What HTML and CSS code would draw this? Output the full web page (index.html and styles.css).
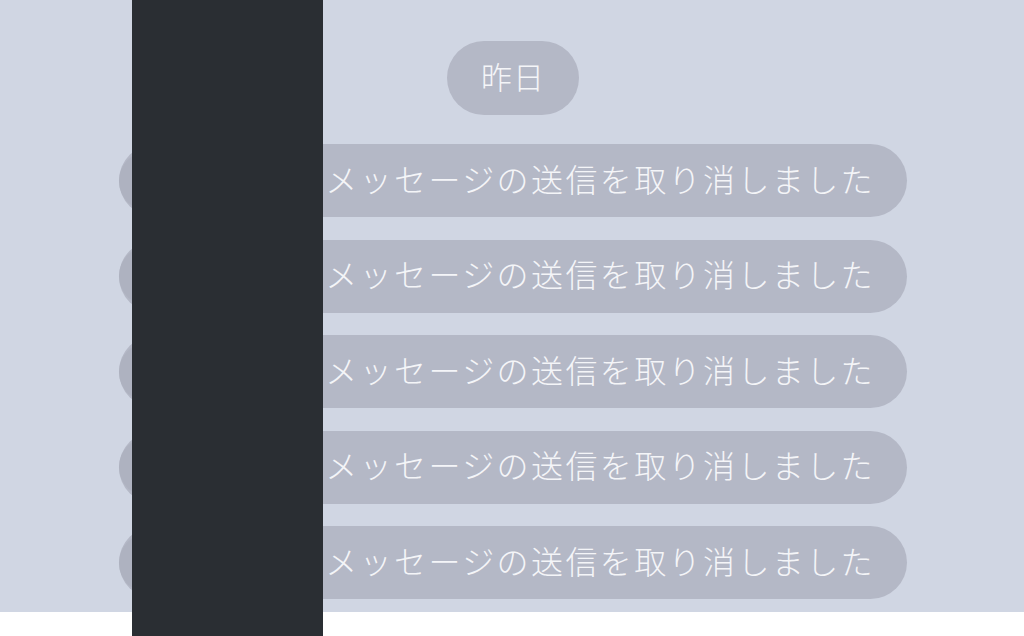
FILE: index.html
```html
<!DOCTYPE html>
<html>
<head>
  <meta charset="utf-8">
  <title>トーク</title>
  <link rel="stylesheet" href="styles.css">
</head>
<body>
  <div class="chat">
    <div class="date-row">
      <span class="date-pill">昨日</span>
    </div>
    <ul class="notices">
      <li class="notice"><span class="avatar"></span><span class="notice-text">メッセージの送信を取り消しました</span></li>
      <li class="notice"><span class="avatar"></span><span class="notice-text">メッセージの送信を取り消しました</span></li>
      <li class="notice"><span class="avatar"></span><span class="notice-text">メッセージの送信を取り消しました</span></li>
      <li class="notice"><span class="avatar"></span><span class="notice-text">メッセージの送信を取り消しました</span></li>
      <li class="notice"><span class="avatar"></span><span class="notice-text">メッセージの送信を取り消しました</span></li>
    </ul>
    <div class="redact"></div>
  </div>
  <div class="footer"></div>
</body>
</html>
```

FILE: styles.css
```css
body {
  margin: 0;
  font-family: 'Noto Sans CJK JP', 'Noto Sans', sans-serif;
  background-color: #fff;
  height: 636px;
  overflow: hidden;
}

.chat {
  position: relative;
  height: 612px;
  background-color: #d0d6e3;
  box-sizing: border-box;
  padding-top: 41px;
}

.date-row {
  display: flex;
  justify-content: center;
  padding-left: 2px;
}

.date-pill {
  display: flex;
  align-items: center;
  justify-content: center;
  width: 132px;
  height: 74px;
  border-radius: 37px;
  background-color: #b4b8c6;
  color: #f4f5f8;
  font-size: 31px;
  font-weight: 300;
  letter-spacing: 1px;
}

.date-pill span,
.date-pill {
  padding-bottom: 5px;
  box-sizing: border-box;
}

.notices {
  list-style: none;
  margin: 29px 0 0 119px;
  padding: 0;
  display: flex;
  flex-direction: column;
  gap: 22.5px;
}

.notice {
  display: flex;
  align-items: center;
  justify-content: space-between;
  width: 788px;
  height: 73px;
  box-sizing: border-box;
  padding-right: 32px;
  border-radius: 37px;
  background-color: #b4b8c6;
}

.avatar {
  width: 60px;
  height: 60px;
  border-radius: 50%;
  background-color: #aeb2c0;
}

.notice-text {
  color: #f4f5f8;
  font-size: 32px;
  font-weight: 300;
  letter-spacing: 2.4px;
  white-space: nowrap;
  margin-bottom: 6px;
}

.redact {
  position: absolute;
  top: 0;
  left: 132px;
  width: 191px;
  height: 636px;
  background-color: #2a2e33;
  z-index: 2;
}

.footer {
  height: 24px;
  background-color: #fff;
}
```
